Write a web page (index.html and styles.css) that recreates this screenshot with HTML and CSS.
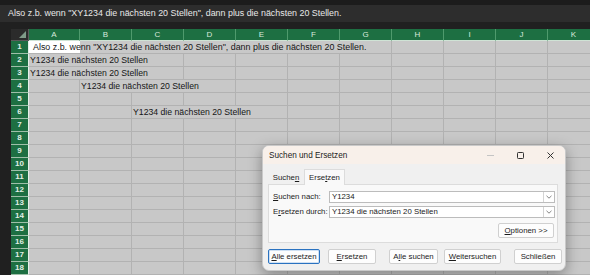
FILE: index.html
```html
<!DOCTYPE html>
<html>

<head>
    <title>Suchen und Ersetzen</title>
    <link rel="stylesheet" href="styles.css">
</head>

<body>
    <div class="formulaTop"></div>
    <div class="formulaBar">Also z.b. wenn "XY1234 die nächsten 20 Stellen", dann plus die nächsten 20 Stellen.</div>
    <div class="formulaGap"></div>

    <div class="sheet">
        <div class="row headRow">
            <div class="strip"></div>
            <div class="corner"><span class="cornerTri"></span></div>
            <div class="colHead">A</div>
            <div class="colHead">B</div>
            <div class="colHead">C</div>
            <div class="colHead">D</div>
            <div class="colHead">E</div>
            <div class="colHead">F</div>
            <div class="colHead">G</div>
            <div class="colHead">H</div>
            <div class="colHead">I</div>
            <div class="colHead">J</div>
            <div class="colHead">K</div>
        </div>
        <div class="row">
            <div class="strip"></div>
            <div class="rowHead">1</div>
            <div class="cell span7 active">Also z.b. wenn "XY1234 die nächsten 20 Stellen", dann plus die nächsten 20 Stellen.</div>
            <div class="cell"></div><div class="cell"></div><div class="cell"></div><div class="cell"></div>
        </div>
        <div class="row">
            <div class="strip"></div>
            <div class="rowHead">2</div>
            <div class="cell span3">Y1234 die nächsten 20 Stellen</div>
            <div class="cell"></div><div class="cell"></div><div class="cell"></div><div class="cell"></div>
            <div class="cell"></div><div class="cell"></div><div class="cell"></div><div class="cell"></div>
        </div>
        <div class="row">
            <div class="strip"></div>
            <div class="rowHead">3</div>
            <div class="cell span3">Y1234 die nächsten 20 Stellen</div>
            <div class="cell"></div><div class="cell"></div><div class="cell"></div><div class="cell"></div>
            <div class="cell"></div><div class="cell"></div><div class="cell"></div><div class="cell"></div>
        </div>
        <div class="row">
            <div class="strip"></div>
            <div class="rowHead">4</div>
            <div class="cell"></div>
            <div class="cell span3">Y1234 die nächsten 20 Stellen</div>
            <div class="cell"></div><div class="cell"></div><div class="cell"></div><div class="cell"></div>
            <div class="cell"></div><div class="cell"></div><div class="cell"></div>
        </div>
        <div class="row" id="row5"></div>
        <div class="row">
            <div class="strip"></div>
            <div class="rowHead">6</div>
            <div class="cell"></div><div class="cell"></div>
            <div class="cell span3">Y1234 die nächsten 20 Stellen</div>
            <div class="cell"></div><div class="cell"></div><div class="cell"></div><div class="cell"></div>
            <div class="cell"></div><div class="cell"></div>
        </div>
        <div id="emptyRows"></div>
    </div>

    <div class="dialog">
        <div class="dlgTitle">
            <span class="dlgName">Suchen und Ersetzen</span>
            <span class="winBtn minBtn"><svg width="7" height="7" viewBox="0 0 7 7"><path d="M0 3.5H7" stroke="#c4c4c4" stroke-width="1"/></svg></span>
            <span class="winBtn"><svg width="7" height="7" viewBox="0 0 7 7"><rect x="0.5" y="0.5" width="6" height="6" rx="0.8" fill="none" stroke="#333" stroke-width="1"/></svg></span>
            <span class="winBtn"><svg width="7" height="7" viewBox="0 0 7 7"><path d="M0.5 0.5L6.5 6.5M6.5 0.5L0.5 6.5" stroke="#333" stroke-width="1"/></svg></span>
        </div>
        <div class="tabs">
            <div class="tab">Suche<u>n</u></div>
            <div class="tab tabActive">Erse<u>t</u>zen</div>
        </div>
        <div class="panel">
            <div class="field">
                <span class="label"><u>S</u>uchen nach:</span>
                <div class="combo"><span class="comboText">Y1234</span><span class="drop"><svg width="6" height="4" viewBox="0 0 6 4"><path d="M0.5 0.8L3 3.2L5.5 0.8" fill="none" stroke="#777" stroke-width="0.9"/></svg></span></div>
            </div>
            <div class="field">
                <span class="label">E<u>r</u>setzen durch:</span>
                <div class="combo"><span class="comboText">Y1234 die nächsten 20 Stellen</span><span class="drop"><svg width="6" height="4" viewBox="0 0 6 4"><path d="M0.5 0.8L3 3.2L5.5 0.8" fill="none" stroke="#777" stroke-width="0.9"/></svg></span></div>
            </div>
            <div class="optRow">
                <div class="btn optBtn"><u>O</u>ptionen &gt;&gt;</div>
            </div>
        </div>
        <div class="btnRow">
            <div class="btn focused w52"><u>A</u>lle ersetzen</div>
            <div class="btn w48 gap8"><u>E</u>rsetzen</div>
            <div class="btn w49 gap13"><span>A<u>l</u>le suchen</span></div>
            <div class="btn w57 gap6"><u>W</u>eitersuchen</div>
            <div class="btn w48 gap13">Schließen</div>
        </div>
    </div>

    <script>
        function buildRow(num) {
            let row = document.createElement("div");
            row.classList.add("row");
            let strip = document.createElement("div");
            strip.classList.add("strip");
            row.append(strip);
            let head = document.createElement("div");
            head.classList.add("rowHead");
            head.textContent = num;
            row.append(head);
            for (let i = 0; i < 11; i++) {
                let c = document.createElement("div");
                c.classList.add("cell");
                row.append(c);
            }
            return row;
        }

        document.querySelector("#row5").replaceWith(buildRow(5));
        let rest = document.querySelector("#emptyRows");
        for (let n = 7; n <= 18; n++) {
            rest.before(buildRow(n));
        }
        rest.remove();
    </script>
</body>

</html>
```

FILE: styles.css
```css
body {
    margin: 0;
    background: #1f1f1f;
    font-family: "Liberation Sans", Arial, sans-serif;
    overflow: hidden;
    width: 590px;
    height: 275px;
}

.formulaTop {
    height: 5px;
    background: #1c1c1c;
}

.formulaBar {
    height: 17px;
    background: #2d2d2d;
    color: #e8e8e8;
    font-size: 8.9px;
    line-height: 17px;
    padding-left: 8px;
    white-space: nowrap;
}

.formulaGap {
    height: 7px;
    background: #202020;
}

.row {
    display: grid;
    grid-template-columns: 11px 18px 51px repeat(10, 52px);
    height: 13px;
}

.headRow {
    height: 12px;
}

.strip {
    background: #202020;
}

.corner {
    background: #2b2b2b;
    border-right: 1px solid #5a5a5a;
    border-bottom: 1px solid #5a5a5a;
    position: relative;
}

.cornerTri {
    position: absolute;
    right: 2px;
    bottom: 2px;
    width: 0;
    height: 0;
    border-left: 7px solid transparent;
    border-bottom: 7px solid #7f9a88;
}

.colHead {
    background: #1d6f42;
    color: #d9e9de;
    font-size: 8px;
    line-height: 11px;
    text-align: center;
    border-right: 1px solid #4f9a6d;
    border-bottom: 1px solid #cfe3d5;
}

.rowHead {
    background: #1d6f42;
    color: #e2eee6;
    font-size: 8px;
    font-weight: bold;
    line-height: 12px;
    text-align: center;
    border-bottom: 1px solid #9fbfa9;
    border-right: 1px solid #e6f0e9;
}

.cell {
    background: #c8c8c8;
    border-right: 1px solid #b2b2b2;
    border-bottom: 1px solid #b2b2b2;
    color: #161616;
    font-size: 8.7px;
    line-height: 12px;
    white-space: nowrap;
    overflow: hidden;
    padding-left: 1px;
}

.span3 {
    grid-column: span 3;
}

.span7 {
    grid-column: span 7;
}

.active {
    background: linear-gradient(to right, #ffffff 51px, #c8c8c8 51px);
    padding-left: 4px;
    font-size: 8.9px;
}

/* dialog sits over the sheet */
.dialog {
    position: absolute;
    left: 262px;
    top: 145px;
    width: 302px;
    height: 124px;
    background: #f0f0f0;
    border: 1px solid #c9c9c9;
    border-radius: 7px;
    box-shadow: 0 4px 14px rgba(0, 0, 0, 0.35);
    overflow: hidden;
    font-family: "Liberation Sans", Arial, sans-serif;
    font-size: 7.8px;
    color: #1b1b1b;
}

.dlgTitle {
    height: 18px;
    background: #f8f0ea;
    display: flex;
    align-items: center;
    padding-left: 6px;
}

.dlgName {
    flex: 1;
    font-size: 8.2px;
}

.winBtn {
    width: 30px;
    display: flex;
    justify-content: center;
}

.minBtn {
    margin-right: 0;
}

.tabs {
    display: flex;
    margin: 5px 0 0 6px;
    height: 15px;
    align-items: flex-end;
}

.tab {
    width: 34px;
    height: 13px;
    line-height: 13px;
    text-align: center;
}

.tabActive {
    width: 39px;
    height: 15px;
    line-height: 15px;
    margin-left: 1px;
    background: #f9f9f9;
    border: 1px solid #dcdcdc;
    border-bottom: none;
    position: relative;
    top: 1px;
}

.panel {
    margin-left: 5px;
    width: 290px;
    height: 59px;
    background: #f9f9f9;
    border: 1px solid #dcdcdc;
    box-sizing: border-box;
    padding: 5px 2px 0 4px;
}

.field {
    display: flex;
    align-items: center;
    height: 13px;
    margin-bottom: 2px;
}

.label {
    width: 56px;
}

.combo {
    flex: 1;
    height: 12px;
    background: #ffffff;
    border: 1px solid #bcbcbc;
    box-sizing: border-box;
    display: flex;
    align-items: center;
}

.comboText {
    flex: 1;
    padding-left: 2px;
}

.drop {
    width: 10px;
    height: 10px;
    border-left: 1px solid #d4d4d4;
    display: flex;
    align-items: center;
    justify-content: center;
}

.optRow {
    display: flex;
    justify-content: flex-end;
    margin-top: 5px;
    padding-right: 1px;
}

.btn {
    height: 15px;
    box-sizing: border-box;
    background: #fdfdfd;
    border: 1px solid #d0d0d0;
    border-radius: 2px;
    text-align: center;
    line-height: 13px;
    white-space: nowrap;
}

.optBtn {
    width: 56px;
}

.btnRow {
    display: flex;
    margin: 6px 0 0 5px;
}

.focused {
    border-color: #2a72c0;
    box-shadow: inset 0 0 0 1px #cfe0f3;
}

.w52 { width: 52px; }
.w48 { width: 48px; }
.w49 { width: 49px; }
.w57 { width: 57px; }
.gap8 { margin-left: 8px; }
.gap13 { margin-left: 13px; }
.gap6 { margin-left: 6px; }
```
